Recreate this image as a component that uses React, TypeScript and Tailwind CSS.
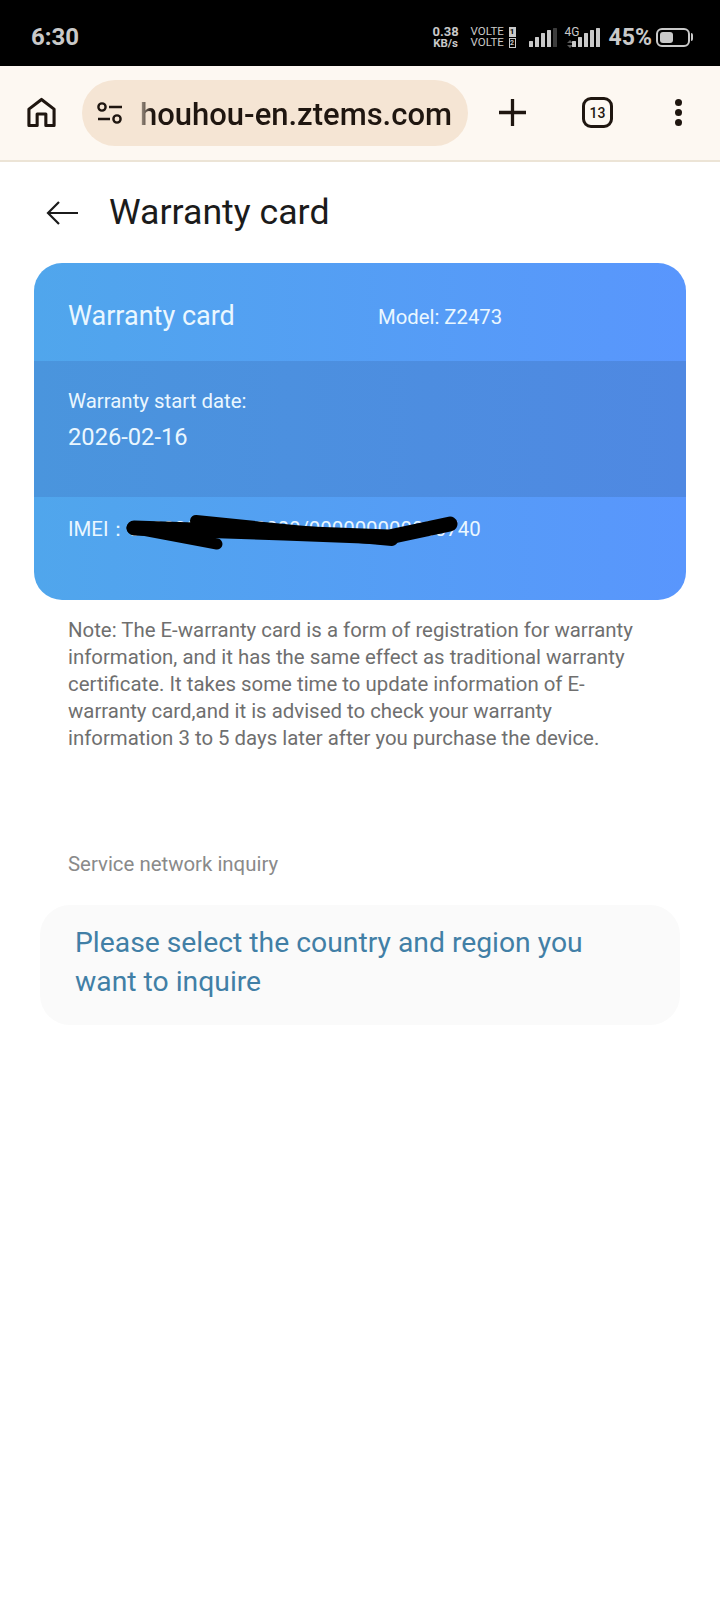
const roboto = "[font-family:Roboto,'Liberation_Sans',sans-serif]";

function SignalBars({ dim }: { dim?: boolean }) {
  return (
    <svg className="block" width="28" height="19" viewBox="0 0 28 19" fill="#c9c9c9">
      <rect x="0" y="13" width="4" height="6" rx="0.5" />
      <rect x="6" y="9" width="4" height="10" rx="0.5" />
      <rect x="12" y="5" width="4" height="14" rx="0.5" />
      <rect x="18" y="2" width="4" height="17" rx="0.5" />
      <rect x="24" y="0" width="4" height="19" rx="0.5" fill={dim ? "#3c3c3c" : "#c9c9c9"} />
    </svg>
  );
}

function StatusBar() {
  return (
    <div className="h-[66px] bg-black flex items-center justify-between pl-[31px] pr-[27px] text-[#c9c9c9]">
      <span className="text-[24px] font-bold leading-none mt-[8px]">6:30</span>
      <div className="flex items-center mt-[8px]">
        <div className="flex flex-col items-center font-bold w-[28px]">
          <span className="text-[13px] leading-[12px]">0.38</span>
          <span className="text-[11.5px] leading-[11px]">KB/s</span>
        </div>
        <div className="flex flex-col text-[11.5px] leading-[11px] ml-[11px] w-[45px]">
          <div className="flex items-center justify-between"><span>VOLTE</span><span className="w-[7px] h-[10px] bg-[#c9c9c9] text-black text-[8px] leading-[10px] text-center font-bold">1</span></div>
          <div className="flex items-center justify-between"><span>VOLTE</span><span className="w-[7px] h-[10px] border border-[#c9c9c9] text-[#c9c9c9] text-[7px] leading-[8px] text-center font-bold">2</span></div>
        </div>
        <div className="ml-[13px]"><SignalBars dim /></div>
        <div className="relative ml-[6px] w-[37px] h-[20px]">
          <span className="absolute left-[2px] top-[-1px] text-[12px] leading-none">4G</span>
          <svg className="absolute left-[4px] top-[13px]" width="6" height="8" viewBox="0 0 6 8" fill="#5a5a5a">
            <path d="M3 0l3 3H0zM0 5h6L3 8z" />
          </svg>
          <div className="absolute right-0 bottom-0"><SignalBars /></div>
        </div>
        <span className="ml-[9px] text-[23px] font-bold leading-none">45%</span>
        <div className="ml-[4px] w-[34px] h-[19px] border-2 border-[#c9c9c9] rounded-[6px] p-[2px]">
          <div className="w-[13px] h-full bg-[#c9c9c9] rounded-[3px]" />
        </div>
        <div className="ml-[1px] w-[2px] h-[8px] bg-[#c9c9c9] rounded-r" />
      </div>
    </div>
  );
}

function BrowserBar() {
  return (
    <div className="h-[96px] bg-[#fdf8f2] border-b-2 border-[#ece4d6] flex items-center pb-[1px] text-[#1f1610]">
      <svg className="ml-[27px]" width="29" height="31" viewBox="0 0 30 32" fill="none" stroke="#1f1610" strokeWidth="3.2" strokeLinejoin="round">
        <path d="M2 29.5V12.5L15 2.5l13 10v17h-8.5v-12h-9v12z" />
      </svg>
      <div className="ml-[26px] w-[386px] h-[66px] rounded-full bg-[#f5e5d4] flex items-center overflow-hidden">
        <svg className="ml-[15px] shrink-0" width="26" height="24" viewBox="0 0 26 24" fill="none" stroke="#1f1610" strokeWidth="2.4">
          <circle cx="5" cy="6" r="3.6" />
          <path d="M12 6h13" />
          <path d="M1 18h12" />
          <circle cx="20" cy="18" r="3.6" />
        </svg>
        <span className="ml-[17px] mt-[3px] text-[31px] font-medium leading-none whitespace-nowrap bg-[linear-gradient(90deg,#a89a8c_0px,#1f1610_12px)] bg-clip-text text-transparent">houhou-en.ztems.com</span>
      </div>
      <svg className="ml-[31px]" width="27" height="27" viewBox="0 0 28 28" stroke="#1f1610" strokeWidth="3.4">
        <path d="M14 0v28M0 14h28" />
      </svg>
      <div className="ml-[56px] w-[31px] h-[31px] border-[3.5px] border-[#1f1610] rounded-[9px] flex items-center justify-center text-[14px] font-medium leading-none">13</div>
      <div className="ml-[62px] flex flex-col gap-[3px]">
        <div className="w-[7px] h-[7px] rounded-full bg-[#1f1610]" />
        <div className="w-[7px] h-[7px] rounded-full bg-[#1f1610]" />
        <div className="w-[7px] h-[7px] rounded-full bg-[#1f1610]" />
      </div>
    </div>
  );
}

function WarrantyCard() {
  return (
    <div className="relative mx-[34px] w-[652px] h-[337px] rounded-[28px] overflow-hidden text-[#eaf7ff] bg-[linear-gradient(90deg,#50a6ec,#5996fd)]">
      <div className="h-[98px] flex items-center pl-[34px]">
        <span className="w-[310px] text-[27px] mt-[8px]">Warranty card</span>
        <span className="text-[20.3px] mt-[10px]">Model: Z2473</span>
      </div>
      <div className="h-[136px] bg-[linear-gradient(90deg,#4a95dd,#4f88e2)] pl-[34px] pt-[27px]">
        <div className="text-[20.4px] leading-[27px]">Warranty start date:</div>
        <div className="text-[23.7px] leading-[30px] mt-[7px]">2026-02-16</div>
      </div>
      <div className="pl-[34px] pt-[19px] text-[20.4px] leading-[27px] whitespace-nowrap">
        IMEI：000000000000000/000000000000740
      </div>
      {/* scribble hiding the number */}
      <svg className="absolute left-0 top-0" width="652" height="337" viewBox="0 0 652 337" fill="none" stroke="#000" strokeLinecap="round" strokeLinejoin="round">
        <path d="M98 265L183 281" strokeWidth="11" />
        <path d="M162 258L260 268L358 277" strokeWidth="12" />
        <path d="M100 265L250 270L355 274L416 261" strokeWidth="15" />
      </svg>
    </div>
  );
}

export default function App() {
  return (
    <div className={`w-[720px] h-[1600px] bg-white overflow-hidden ${roboto}`}>
      <StatusBar />
      <BrowserBar />
      <div className="h-[101px] flex items-center pl-[46px] text-[#1b1b1b]">
        <svg width="32" height="24" viewBox="0 0 32 24" fill="none" stroke="#1b1b1b" strokeWidth="2.2">
          <path d="M32 12H2M13 1L2 12l11 11" />
        </svg>
        <span className="ml-[31px] text-[35.7px] leading-none">Warranty card</span>
      </div>
      <WarrantyCard />
      <p className="mx-[68px] mt-[17px] text-[20.4px] leading-[27px] text-[#6f6f6f] w-[590px]">
        Note: The E-warranty card is a form of registration for warranty information, and it has the same effect as traditional warranty certificate. It takes some time to update information of E-warranty card,and it is advised to check your warranty information 3 to 5 days later after you purchase the device.
      </p>
      <div className="ml-[68px] mt-[99px] text-[20.4px] leading-[27px] text-[#8a8a8a]">Service network inquiry</div>
      <div className="mx-[40px] mt-[27px] w-[640px] h-[120px] rounded-[30px] bg-[#fafafa] pl-[35px] pt-[18px] pr-[60px] text-[28.3px] leading-[39px] text-[#417fa6]">
        Please select the country and region you want to inquire
      </div>
    </div>
  );
}
